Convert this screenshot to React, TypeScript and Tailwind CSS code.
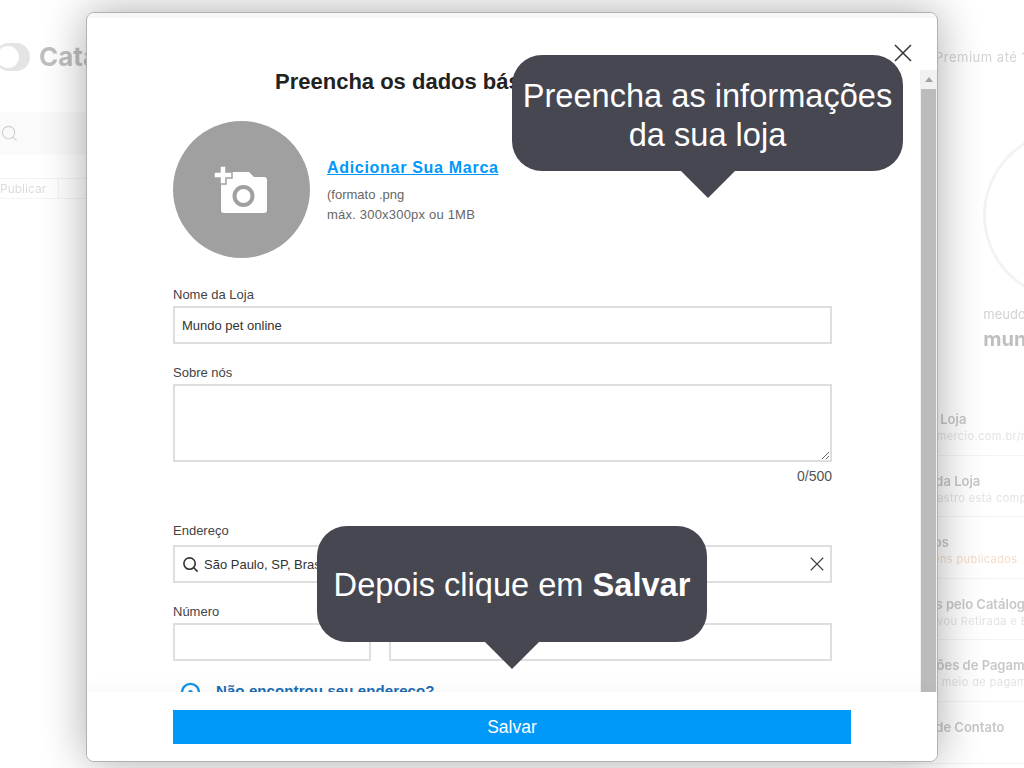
import React from 'react'

const rows = [
  { title: 'Link da Loja', sub: 'www.comercio.com.br/mundopet', tone: 'text-[#e3e3e3]' },
  { title: 'Dados da Loja', sub: 'Seu cadastro está completo', tone: 'text-[#e3e3e3]' },
  { title: 'Produtos', sub: 'Há 12 itens publicados', tone: 'text-[#f5dcc8]' },
  { title: 'Pedidos pelo Catálogo', sub: 'Você ativou Retirada e Entrega', tone: 'text-[#e3e3e3]' },
  { title: 'Condições de Pagamento', sub: 'Nenhum meio de pagamento', tone: 'text-[#e3e3e3]' },
  { title: 'Dados de Contato', sub: '', tone: 'text-[#e3e3e3]' },
]

function CloseIcon({ className }: { className: string }) {
  return (
    <svg viewBox="0 0 18 18" className={className} fill="none" stroke="currentColor" strokeWidth="1.5">
      <path d="M1 1 17 17M17 1 1 17" />
    </svg>
  )
}

function Background() {
  return (
    <div className="flex h-full overflow-hidden blur-[0.4px] font-['Inter',sans-serif]">
      <div className="w-[860px] shrink-0">
        <div className="flex items-center gap-[9px] pt-[42px] ml-[-5px] h-[71px]">
          <div className="w-[35px] h-[28px] rounded-full bg-[#e4e4e4] flex items-center pl-[2px]">
            <div className="w-[22px] h-[22px] rounded-full bg-white"></div>
          </div>
          <span className="text-[26px] font-bold text-[#bfbfbf] leading-[28px]">Catálogo</span>
        </div>
        <div className="mt-[41px] h-[43px] bg-[#fafafa] flex items-center pl-[1px]">
          <svg viewBox="0 0 18 18" className="w-[17px] h-[17px] text-[#cfcfcf]" fill="none" stroke="currentColor" strokeWidth="1.2">
            <circle cx="8" cy="8" r="6.5" />
            <path d="m12.5 12.5 4 4" />
          </svg>
        </div>
        <div className="mt-[23px] h-[21px] flex border-y border-[#f3f3f3] text-[12px] text-[#dcdcdc] leading-[19px]">
          <span className="w-[59px] border-r border-[#f3f3f3]">Publicar</span>
        </div>
      </div>
      <div className="w-[416px] shrink-0">
        <div className="pt-[49px] pl-[75px] text-[13px] leading-[16px] tracking-[0.5px] text-[#d4d4d4] whitespace-nowrap">Premium até 10/10/2025</div>
        <div className="mx-auto mt-[65px] w-[170px] h-[170px] rounded-full border-[3px] border-[#f3f3f3]"></div>
        <div className="mt-[5px] text-center text-[13px] leading-[18px] text-[#d2d2d2] whitespace-nowrap">meudominio.com.br/mundo</div>
        <div className="mt-[4px] text-center text-[20px] leading-[24px] font-bold text-[#bfbfbf] whitespace-nowrap">mundo pet online</div>
        <div className="mt-[43px] ml-[32px]">
          {rows.map((r) => (
            <div key={r.title} className="h-[61.6px] border-b border-[#f4f4f4] pt-[16px] whitespace-nowrap overflow-hidden">
              <div className="text-[13px] leading-[18px] font-semibold text-[#c8c8c8]">{r.title}</div>
              <div className={`text-[11px] leading-[16px] tracking-[0.4px] ${r.tone}`}>{r.sub}</div>
            </div>
          ))}
        </div>
      </div>
    </div>
  )
}

function CameraIcon() {
  return (
    <svg viewBox="0 0 137 137" className="w-[137px] h-[137px] shrink-0">
      <circle cx="68.5" cy="68.5" r="68.5" fill="#a0a0a0" />
      <path d="M48 51h28l5 5h10a3 3 0 0 1 3 3v30a3 3 0 0 1-3 3H51a3 3 0 0 1-3-3Z" fill="#fff" />
      <path d="M47 45h6v6h6v6h-6v6h-6v-6h-6v-6h6Z" fill="#fff" stroke="#a0a0a0" strokeWidth="1.5" />
      <circle cx="70.5" cy="75" r="9" fill="#fff" stroke="#a0a0a0" strokeWidth="4" />
    </svg>
  )
}

function Field({ label, children, className }: { label: string; children: React.ReactNode; className?: string }) {
  return (
    <div className={className}>
      <label className="block text-[13px] leading-[14px] text-[#444]">{label}</label>
      {children}
    </div>
  )
}

const inputCls = 'w-full h-[38px] border-2 border-[#dedede] bg-white px-[7px] text-[13px] text-[#333] outline-none'

function Modal() {
  return (
    <div className="absolute left-[86px] top-[12px] w-[852px] h-[750px] bg-white rounded-[8px] border border-[#b0b0b0] shadow-[0_0_45px_rgba(0,0,0,0.33)] flex flex-col overflow-hidden font-['Liberation_Sans',sans-serif]">
      <div className="h-[5px] bg-[#f7f7f7] shrink-0"></div>
      <div className="relative flex-1 min-h-0 flex overflow-hidden">
        <div className="flex-1 min-w-0 pl-[86px] pr-[105px]">
          <h2 className="ml-[102px] mt-[52px] text-[22px] leading-[24px] font-bold text-[#222] whitespace-nowrap">Preencha os dados básicos da loja</h2>
          <div className="mt-[27px] flex items-center gap-[17px]">
            <CameraIcon />
            <div className="pt-[4px]">
              <a className="block text-[16px] leading-[20px] font-bold tracking-[0.7px] text-[#0099fa] underline">Adicionar Sua Marca</a>
              <p className="mt-[7px] text-[13px] leading-[20px] text-[#666]">(formato .png<br /><span className="tracking-[0.2px]">máx. 300x300px ou 1MB</span></p>
            </div>
          </div>
          <Field label="Nome da Loja" className="mt-[30px]">
            <input className={`${inputCls} mt-[4px]`} defaultValue="Mundo pet online" />
          </Field>
          <Field label="Sobre nós" className="mt-[22px]">
            <textarea className="block mt-[4px] w-full h-[78px] border-2 border-[#dedede] bg-white" />
          </Field>
          <div className="mt-[6px] text-right text-[14px] leading-[16px] text-[#555]">0/500</div>
          <Field label="Endereço" className="mt-[40px]">
            <div className="relative mt-[7px]">
              <svg viewBox="0 0 18 18" className="absolute left-[9px] top-[11px] w-[17px] h-[17px] text-[#333]" fill="none" stroke="currentColor" strokeWidth="1.7">
                <circle cx="8" cy="8" r="6" />
                <path d="m12.5 12.5 4 4" />
              </svg>
              <input className={`${inputCls} pl-[29px]`} defaultValue="São Paulo, SP, Brasil" />
              <CloseIcon className="absolute right-[8px] top-[12px] w-[14px] h-[14px] text-[#444]" />
            </div>
          </Field>
          <div className="mt-[22px] flex gap-[18px]">
            <Field label="Número" className="w-[198px] shrink-0">
              <input className={`${inputCls} mt-[4px]`} />
            </Field>
            <Field label="Complemento" className="flex-1">
              <input className={`${inputCls} mt-[4px]`} />
            </Field>
          </div>
          <div className="mt-[21px] ml-[7px] flex items-center gap-[15px]">
            <svg viewBox="0 0 22 22" className="w-[21px] h-[21px] text-[#1793ea] shrink-0" fill="none" stroke="currentColor" strokeWidth="2.5">
              <circle cx="11" cy="11" r="9" />
              <circle cx="11" cy="11" r="2.5" fill="currentColor" stroke="none" />
            </svg>
            <span className="mt-[-4px] text-[15px] leading-[16px] tracking-[0.1px] font-bold text-[#1a6cb3] whitespace-nowrap">Não encontrou seu endereço?</span>
          </div>
        </div>
        <div className="absolute right-0 top-[52px] bottom-0 w-[17px] bg-[#f1f1f1] flex flex-col items-center">
          <div className="mt-[7px] w-0 h-0 border-x-[4px] border-x-transparent border-b-[5px] border-b-[#a3a3a3]"></div>
          <div className="mt-[7px] w-[15px] flex-1 bg-[#bcbcbc]"></div>
        </div>
        <button className="absolute right-[25px] top-[26px] text-[#333]">
          <CloseIcon className="w-[18px] h-[18px]" />
        </button>
      </div>
      <div className="h-[69px] shrink-0 bg-white shadow-[0_-8px_12px_rgba(0,0,0,0.025)] relative pt-[18px] px-[86px]">
        <button className="block w-[678px] h-[34px] bg-[#0099fa] text-white text-[17.5px]">Salvar</button>
      </div>
    </div>
  )
}

function Tip({ className, children }: { className: string; children: React.ReactNode }) {
  return (
    <div className={`absolute h-[116px] rounded-[30px] bg-[#474752] flex items-center justify-center text-center text-white text-[32.6px] font-['Liberation_Sans',sans-serif] ${className}`}>
      {children}
      <div className="absolute top-full left-1/2 -translate-x-1/2 w-0 h-0 border-x-[27px] border-x-transparent border-t-[27px] border-t-[#474752]"></div>
    </div>
  )
}

export default function App() {
  return (
    <div className="relative w-[1024px] h-[768px] overflow-hidden bg-white">
      <Background />
      <Modal />
      <Tip className="left-[512px] top-[55px] w-[391px] leading-[39px] pt-[4px]">
        <span>Preencha as informações<br />da sua loja</span>
      </Tip>
      <Tip className="left-[317px] top-[526px] w-[390px] leading-[36px] pt-[2px]">
        <span>Depois clique em <b>Salvar</b></span>
      </Tip>
    </div>
  )
}
